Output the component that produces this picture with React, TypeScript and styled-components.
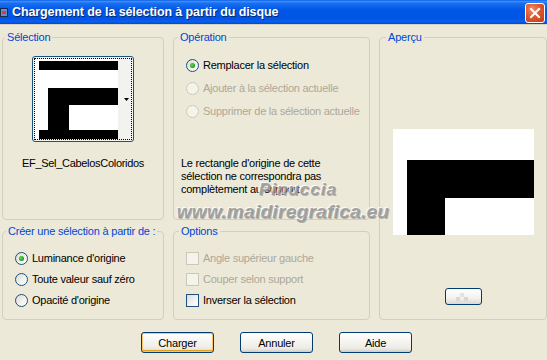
import React from "react";
import styled, { createGlobalStyle } from "styled-components";

const GlobalStyle = createGlobalStyle`
  html, body { margin: 0; padding: 0; background: #ECE9D8; }
  body { font-family: "Liberation Sans", Arial, sans-serif; font-size: 11px; }
  * { box-sizing: border-box; }
`;

const Window = styled.div`
  position: relative;
  width: 547px;
  height: 360px;
  background: #ece9d8;
  display: flex;
  flex-direction: column;
  overflow: hidden;
`;

const TitleBar = styled.div`
  height: 25px;
  flex: none;
  display: flex;
  align-items: center;
  padding: 0 2px 0 0;
  background: linear-gradient(
    #0a5fe8 0%,
    #3b8cf7 6%,
    #1a6ff0 14%,
    #0058e6 40%,
    #0054e3 75%,
    #0a5ff0 90%,
    #0049d0 100%
  );
  border-bottom: 1px solid #d8d4c4;
`;

const TitleIcon = styled.div`
  width: 9px;
  height: 13px;
  margin-right: 3px;
  display: flex;
`;

const TitleText = styled.div`
  flex: 1;
  color: #fff;
  font-family: "Liberation Sans", Arial, sans-serif;
  font-weight: bold;
  font-size: 12.5px;
  letter-spacing: -0.1px;
  text-shadow: 1px 1px 0 #0a246a;
  white-space: nowrap;
`;

const CloseButton = styled.div`
  width: 20px;
  height: 20px;
  border: 1px solid #fff;
  border-radius: 3px;
  background: radial-gradient(circle at 35% 30%, #f08a6a 0%, #e0552f 45%, #c23a14 100%);
  display: flex;
  align-items: center;
  justify-content: center;
  margin-top: 1px;
`;

const Body = styled.div`
  display: grid;
  grid-template-columns: 162px 197px 168px;
  grid-template-rows: 189px 95px;
  column-gap: 9px;
  row-gap: 5px;
  padding: 6px 2px 0 2px;
`;

const Group = styled.fieldset<{ $span?: boolean }>`
  margin: 0;
  padding: 0;
  min-width: 0;
  border: 1px solid #d0d0bf;
  border-radius: 4px;
  grid-row: ${(p) => (p.$span ? "1 / span 2" : "auto")};
  grid-column: ${(p) => (p.$span ? "3" : "auto")};
`;

const Legend = styled.legend<{ $indent: number }>`
  color: #0046d5;
  font-size: 11px;
  line-height: 13px;
  padding: 0 2px;
  margin-left: ${(p) => p.$indent}px;
  letter-spacing: -0.2px;
`;

const CenterColumn = styled.div`
  display: flex;
  flex-direction: column;
  align-items: center;
`;

const ThumbButton = styled.div`
  position: relative;
  width: 102px;
  height: 86px;
  margin-top: 12px;
  border: 1px solid #1c5180;
  border-radius: 3px;
  background: #f4f4f0;
  padding: 1px;
`;

const FocusRing = styled.div`
  width: 100%;
  height: 100%;
  border: 1px dotted #000;
  display: flex;
`;

const FileName = styled.div`
  margin-top: 15px;
  font-size: 11px;
  line-height: 13px;
  letter-spacing: -0.3px;
  color: #000;
`;

const OptionList = styled.div<{ $top: number; $gap: number; $left: number }>`
  display: flex;
  flex-direction: column;
  gap: ${(p) => p.$gap}px;
  padding-top: ${(p) => p.$top}px;
  padding-left: ${(p) => p.$left}px;
`;

const OptionRow = styled.label<{ $disabled?: boolean }>`
  display: flex;
  align-items: center;
  gap: 4px;
  height: 13px;
  font-size: 11px;
  line-height: 13px;
  letter-spacing: -0.25px;
  color: ${(p) => (p.$disabled ? "#aca899" : "#000")};
  white-space: nowrap;
`;

const RadioCircle = styled.span<{ $disabled?: boolean; $checked?: boolean }>`
  width: 13px;
  height: 13px;
  flex: none;
  border-radius: 50%;
  border: 1px solid ${(p) => (p.$disabled ? "#cac8bb" : "#1c5180")};
  background: ${(p) =>
    p.$disabled ? "#f5f4ea" : "linear-gradient(135deg, #dcd9cf 0%, #f4f3ee 60%, #ffffff 100%)"};
  display: flex;
  align-items: center;
  justify-content: center;
  &::after {
    content: "";
    display: ${(p) => (p.$checked ? "block" : "none")};
    width: 5px;
    height: 5px;
    border-radius: 50%;
    background: radial-gradient(circle at 40% 40%, #5ee05e 0%, #21a121 60%, #1a8a1a 100%);
  }
`;

const CheckBox = styled.span<{ $disabled?: boolean }>`
  width: 13px;
  height: 13px;
  flex: none;
  border: 1px solid ${(p) => (p.$disabled ? "#cac8bb" : "#1c5180")};
  background: ${(p) =>
    p.$disabled ? "#f5f4ea" : "linear-gradient(135deg, #dcdcd7 0%, #f4f4f0 60%, #ffffff 100%)"};
`;

const Note = styled.p`
  margin: 39px 0 0 7px;
  font-size: 11px;
  line-height: 13px;
  letter-spacing: -0.25px;
  color: #000;
`;

const PreviewBox = styled.div`
  margin-top: 85px;
  width: 141px;
  height: 106px;
  display: flex;
`;

const SmallButton = styled.div`
  margin-top: 53px;
  width: 37px;
  height: 17px;
  border: 1px solid #003c74;
  border-radius: 3px;
  background: linear-gradient(#ffffff 0%, #f3f2ed 60%, #dcd8cb 100%);
  display: flex;
  align-items: center;
  justify-content: center;
`;

const ButtonRow = styled.div`
  display: flex;
  justify-content: center;
  gap: 26px;
  padding-left: 6px;
  margin-top: 12px;
`;

const PushButton = styled.div<{ $default?: boolean }>`
  width: 73px;
  height: 21px;
  border: 1px solid #003c74;
  border-radius: 3px;
  background: linear-gradient(#ffffff 0%, #f4f3ee 50%, #ecebe6 80%, #d6d0c5 100%);
  box-shadow: ${(p) =>
    p.$default ? "inset 0 0 0 1px #f9c56a, inset 0 -1px 0 1px #e5a01a" : "inset 0 -1px 0 #d6d0c5"};
  display: flex;
  align-items: center;
  justify-content: center;
  font-size: 11px;
  color: #000;
  letter-spacing: -0.2px;
`;

const Watermark = styled.div`
  position: absolute;
  left: 178px;
  top: 181px;
  width: 210px;
  display: flex;
  flex-direction: column;
  align-items: center;
  font-family: "Liberation Sans", Arial, sans-serif;
  font-weight: bold;
  font-style: italic;
  color: rgba(150, 150, 150, 0.85);
  text-shadow: -1px -1px 0 rgba(255, 255, 255, 0.8), 1px 1px 0 rgba(120, 120, 120, 0.5);
  pointer-events: none;
  line-height: 1;
`;

const WmName = styled.div`
  font-size: 17px;
  letter-spacing: 1px;
  margin-left: 30px;
`;

const WmUrl = styled.div`
  font-size: 19px;
  margin-top: 4px;
  letter-spacing: 0.3px;
`;

function Radio({ label, checked, disabled }: { label: string; checked?: boolean; disabled?: boolean }) {
  return (
    <OptionRow $disabled={disabled}>
      <RadioCircle $checked={checked} $disabled={disabled} />
      {label}
    </OptionRow>
  );
}

function Check({ label, disabled }: { label: string; disabled?: boolean }) {
  return (
    <OptionRow $disabled={disabled}>
      <CheckBox $disabled={disabled} />
      {label}
    </OptionRow>
  );
}

export default function App() {
  return (
    <>
      <GlobalStyle />
      <Window>
        <TitleBar>
          <TitleIcon>
            <svg width="9" height="13" viewBox="0 0 9 13">
              <rect x="0" y="2" width="8" height="9" fill="#1a2a4a" />
              <rect x="1" y="3" width="6" height="7" fill="#6b8cc8" />
              <rect x="2" y="5" width="4" height="3" fill="#d04040" />
            </svg>
          </TitleIcon>
          <TitleText>Chargement de la sélection à partir du disque</TitleText>
          <CloseButton>
            <svg width="12" height="12" viewBox="0 0 12 12">
              <path d="M2 2 L10 10 M10 2 L2 10" stroke="#fff" strokeWidth="2" strokeLinecap="square" />
            </svg>
          </CloseButton>
        </TitleBar>

        <Body>
          <Group>
            <Legend $indent={2}>Sélection</Legend>
            <CenterColumn>
              <ThumbButton>
                <FocusRing>
                  <svg width="96" height="80" viewBox="0 0 96 80">
                    <rect x="0" y="0" width="96" height="80" fill="#ffffff" />
                    <rect x="83" y="0" width="13" height="80" fill="#f2f2ee" />
                    <rect x="4" y="2" width="79" height="9" fill="#000" />
                    <rect x="13" y="29" width="70" height="17" fill="#000" />
                    <rect x="13" y="29" width="21" height="43" fill="#000" />
                    <rect x="4" y="71" width="79" height="9" fill="#000" />
                    <path d="M89 39 L94 39 L91.5 42 Z" fill="#000" />
                  </svg>
                </FocusRing>
              </ThumbButton>
              <FileName>EF_Sel_CabelosColoridos</FileName>
            </CenterColumn>
          </Group>

          <Group>
            <Legend $indent={4}>Opération</Legend>
            <OptionList $top={15} $gap={10} $left={12}>
              <Radio label="Remplacer la sélection" checked />
              <Radio label="Ajouter à la sélection actuelle" disabled />
              <Radio label="Supprimer de la sélection actuelle" disabled />
            </OptionList>
            <Note>
              Le rectangle d'origine de cette
              <br />
              sélection ne correspondra pas
              <br />
              complètement au support.
            </Note>
          </Group>

          <Group $span>
            <Legend $indent={6}>Aperçu</Legend>
            <CenterColumn>
              <PreviewBox>
                <svg width="141" height="106" viewBox="0 0 141 106">
                  <rect x="0" y="0" width="141" height="106" fill="#fff" />
                  <rect x="14" y="31" width="127" height="38" fill="#000" />
                  <rect x="14" y="31" width="38" height="75" fill="#000" />
                </svg>
              </PreviewBox>
              <SmallButton>
                <svg width="14" height="8" viewBox="0 0 14 8">
                  <rect x="0" y="4" width="4" height="4" fill="#d8d8d8" />
                  <rect x="4" y="0" width="4" height="4" fill="#e2e2e2" />
                  <rect x="8" y="4" width="4" height="4" fill="#d8d8d8" />
                </svg>
              </SmallButton>
            </CenterColumn>
          </Group>

          <Group>
            <Legend $indent={3}>Créer une sélection à partir de :</Legend>
            <OptionList $top={14} $gap={8} $left={12}>
              <Radio label="Luminance d'origine" checked />
              <Radio label="Toute valeur sauf zéro" />
              <Radio label="Opacité d'origine" />
            </OptionList>
          </Group>

          <Group>
            <Legend $indent={5}>Options</Legend>
            <OptionList $top={14} $gap={8} $left={12}>
              <Check label="Angle supérieur gauche" disabled />
              <Check label="Couper selon support" disabled />
              <Check label="Inverser la sélection" />
            </OptionList>
          </Group>
        </Body>

        <ButtonRow>
          <PushButton $default>Charger</PushButton>
          <PushButton>Annuler</PushButton>
          <PushButton>Aide</PushButton>
        </ButtonRow>

        <Watermark>
          <WmName>Pinuccia</WmName>
          <WmUrl>www.maidiregrafica.eu</WmUrl>
        </Watermark>
      </Window>
    </>
  );
}
